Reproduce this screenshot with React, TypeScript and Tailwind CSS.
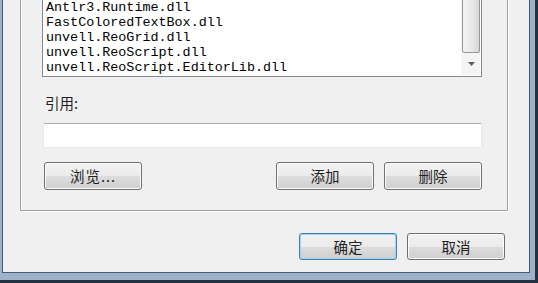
import React from "react";

const items = [
  "Antlr3.Runtime.dll",
  "FastColoredTextBox.dll",
  "unvell.ReoGrid.dll",
  "unvell.ReoScript.dll",
  "unvell.ReoScript.EditorLib.dll",
];

const cjk = "font-[family-name:'Microsoft_YaHei','Noto_Sans_CJK_SC',sans-serif]";

function Button({ label, primary = false, className = "" }: { label: string; primary?: boolean; className?: string }) {
  return (
    <button
      className={`w-[98px] rounded-[3px] border ${
        primary
          ? "border-[#3c7fb1] shadow-[inset_0_0_0_1px_#9fd5f5]"
          : "border-[#707070] shadow-[inset_0_0_0_1px_#fcfcfc]"
      } bg-[linear-gradient(#f2f2f2_0%,#ebebeb_50%,#dddddd_51%,#cfcfcf_100%)] text-[14.5px] leading-none text-[#1e1e1e] ${cjk} flex items-center justify-center pt-px ${className}`}
    >
      {label}
    </button>
  );
}

export default function App() {
  return (
    <div className="w-[538px] h-[283px] overflow-hidden bg-[#9db3cb] border-r-[3px] border-b-[3px] border-[#26313f] flex">
      {/* client area */}
      <div className="ml-[2px] w-[528px] h-[273px] border-l border-r border-b border-[#4a5a6c] bg-[#f0f0f0] flex flex-col">
        {/* group box, top runs off the screen */}
        <div className="ml-[17px] mt-[-40px] w-[488px] h-[251px] border border-[#a0a0a0] shadow-[1px_1px_0_#ffffff,inset_1px_1px_0_#ffffff] flex flex-col pl-[21px]">
          {/* list box */}
          <div className="mt-[19px] w-[440px] h-[97px] border border-[#828790] bg-white flex">
            <div className="flex-1 pt-[19px] pl-[3px] font-[family-name:'Courier_New','Liberation_Mono','Cousine',monospace] text-[13.4px] leading-[15px] text-black">
              {items.map((it) => (
                <div key={it} className="h-[15px] whitespace-nowrap">
                  {it}
                </div>
              ))}
            </div>
            {/* vertical scrollbar */}
            <div className="w-[19px] my-px mr-px flex flex-col bg-[#f4f4f4] pl-[1px]">
              <div className="h-[72px] rounded-b-[2px] border border-[#979797] bg-[linear-gradient(90deg,#f3f3f3,#e6e6e6_60%,#d6d6d6)]" />
              <div className="flex-1" />
              <div className="h-[22px] flex items-center justify-center">
                <svg width="7" height="4" viewBox="0 0 7 4">
                  <path d="M0 0h7L3.5 4z" fill="#606060" />
                </svg>
              </div>
            </div>
          </div>

          <div className={`mt-[16px] h-[20px] flex items-center pl-[3px] text-[14.5px] text-[#1e1e1e] ${cjk}`}>引用:</div>

          <div className="mt-[10px] ml-px w-[439px] h-[25px] rounded-[2px] border border-[#e3e9ef] border-t-[#abadb3] bg-white" />

          <div className="mt-[14px] w-[440px] h-[28px] flex gap-[10px]">
            <Button label="浏览..." className="ml-[2px] tracking-[1px]" />
            <div className="flex-1" />
            <Button label="添加" />
            <Button label="删除" />
          </div>
        </div>

        {/* dialog buttons */}
        <div className="mt-[22px] h-[27px] flex justify-end gap-[10px] pr-[24px]">
          <Button label="确定" primary />
          <Button label="取消" />
        </div>
      </div>
    </div>
  );
}
